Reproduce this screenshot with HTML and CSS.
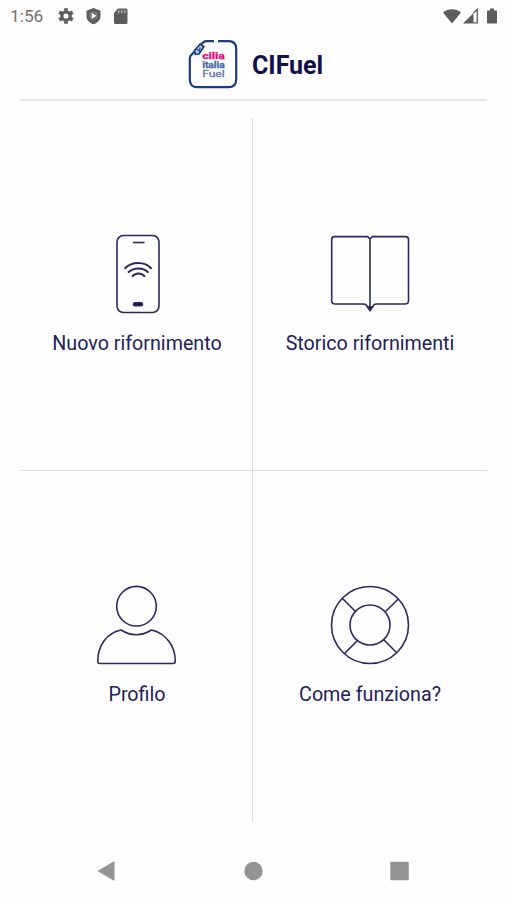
FILE: index.html
```
<!DOCTYPE html>
<html lang="it">
<head>
<meta charset="utf-8">
<title>CIFuel</title>
<link rel="stylesheet" href="styles.css">
</head>
<body>
<div class="status">
  <span class="clock">1:56</span>
  <svg class="status-left" width="74" height="20" viewBox="0 0 74 20">
    <g fill="none" stroke="#5d5d5d">
      <circle cx="9" cy="10" r="4.200" stroke-width="3.200"/>
      <path stroke-width="3.800" d="M9 2.200v2.600M9 15.200v2.600M2.300 6.100l2.200 1.300M13.500 12.600l2.200 1.300M2.300 13.900l2.200-1.300M13.500 7.400l2.200-1.300"/>
    </g>
    <path fill="#5d5d5d" d="M36.500 2l7 2.700v5.300c0 4-2.800 6.900-7 8.200-4.200-1.300-7-4.200-7-8.200V4.700z"/>
    <circle cx="36.500" cy="9.700" r="3.700" fill="none" stroke="#8a8a8a" stroke-width="1"/>
    <path fill="#fff" d="M34.700 6.700l5 3-5 3z"/>
    <path fill="#5d5d5d" d="M61 2.500h8q1.500 0 1.500 1.500v12.500q0 1.500-1.500 1.500H58.500q-1.500 0-1.500-1.500V7z"/>
    <path stroke="#b5b5b5" stroke-width="1.500" d="M61.700 4.300v3M64.700 4.300v3M67.700 4.300v3"/>
  </svg>
  <svg class="status-right" width="56" height="20" viewBox="0 0 56 20">
    <path fill="#5d5d5d" d="M1 6.500C6 2.300 14 2.300 19 6.500L10 17.500z"/>
    <path fill="#5d5d5d" d="M21 17.500L31.500 7v10.500z"/>
    <path fill="none" stroke="#5d5d5d" stroke-width="1.300" d="M31.500 7l3.800-3.800v13.600h-3.800"/>
    <path fill="#5d5d5d" d="M46 4.500h2v-2h4v2h2q1 0 1 1v11q0 1-1 1h-8q-1 0-1-1v-11q0-1 1-1z"/>
  </svg>
</div>
<header class="header">
  <svg class="logo" width="50" height="50" viewBox="0 0 50 50">
    <path fill="none" stroke="#183b82" stroke-width="2.200" d="M30 2.200h10.500q7.700 0 7.700 7.700v30.600q0 7.700-7.700 7.700H9.500q-7.700 0-7.700-7.700V19.500q0-2 1.500-3.600l3.500-3.500M13.500 5l1.800-1.600q1.300-1.200 3.200-1.200H26"/>
    <path fill="#b9cbe4" stroke="#183b82" stroke-width="1.700" d="M6.500 11.500l5.800-6.500 3.500 2.800-4.800 7.200-3.700.3z"/>
    <path fill="none" stroke="#183b82" stroke-width="1.200" d="M8 10l4.500 2.200M11 12.500l1.300-4"/>
    <g class="logo-text">
      <text x="14.200" y="19.500" textLength="22.500" lengthAdjust="spacingAndGlyphs" fill="#e4097c" stroke="#e4097c">cilia</text>
      <text x="14.200" y="28.800" textLength="22.500" lengthAdjust="spacingAndGlyphs" fill="#426aa5" stroke="#426aa5">italia</text>
      <text class="thin" x="14.200" y="38" textLength="22.500" lengthAdjust="spacingAndGlyphs" fill="#5f79ac" stroke="#5f79ac">Fuel</text>
    </g>
  </svg>
  <h1 class="title">CIFuel</h1>
</header>
<main class="menu">
  <section class="tile">
    <svg class="icon" viewBox="0 0 80 80">
      <rect x="20" y="1.500" width="42" height="77" rx="6.500"/>
      <path d="M36 8.500h11.500"/>
      <path stroke-width="2" d="M27.500 34.800c7.500-7.600 20.500-7.600 27 0M31 38.600c5.500-5.600 15.500-5.600 20.500 0M35 42.700c3.500-4.300 9.500-4.300 13 0"/>
      <rect class="solid" x="36.500" y="68.700" width="9" height="3" rx="1.500"/>
    </svg>
    <div class="label">Nuovo rifornimento</div>
  </section>
  <section class="tile">
    <svg class="icon" viewBox="0 0 80 80">
      <path d="M40 4.800L37.500 2.600H4.500Q1.700 2.600 1.700 5.400V66.700Q1.700 70 5 70H33.500Q36 70 37 72L40 75L43 72Q44 70 46.500 70H75Q78.500 70 78.500 66.700V5.400Q78.500 2.600 75.700 2.600H42.500z"/>
      <path d="M40 4.500v70"/>
      <path class="solid" d="M37.500 73h5L40 76.500z"/>
    </svg>
    <div class="label">Storico rifornimenti</div>
  </section>
  <section class="tile">
    <svg class="icon" viewBox="0 0 80 80">
      <circle cx="39.500" cy="21.200" r="19.800"/>
      <path d="M24 45Q39.200 54.500 54.500 45C68.500 48 78.300 61 78.300 76Q78.300 78.500 76 78.500H2.500Q0.800 78.500 0.800 76C0.800 61 9.500 48 24 45z"/>
    </svg>
    <div class="label">Profilo</div>
  </section>
  <section class="tile">
    <svg class="icon" viewBox="0 0 80 80">
      <circle cx="40" cy="40" r="38.500"/>
      <circle cx="40" cy="40" r="20"/>
      <path d="M12.500 13.500L25.500 26.500M68.300 14L55.500 26.500M14.500 68.500L27.500 55.500M66.500 67.500L53.500 54.500"/>
    </svg>
    <div class="label">Come funziona?</div>
  </section>
</main>
<nav class="nav">
  <svg class="nav-icons" width="312" height="24" viewBox="0 0 312 24" fill="#939393">
    <path d="M0.300 12L17.500 2v20z"/>
    <circle cx="156.500" cy="12" r="9.200"/>
    <rect x="293.300" y="2.800" width="18.500" height="18.500" rx="1"/>
  </svg>
</nav>
</body>
</html>
```
FILE: styles.css
```
* {
  box-sizing: border-box;
}

body {
  margin: 0;
  width: 506px;
  height: 900px;
  overflow: hidden;
  display: flex;
  flex-direction: column;
  background: #fefefe;
  color: #11104d;
  font-family: Roboto, sans-serif;
}

svg {
  display: block;
}

.status {
  height: 32px;
  padding: 0 8px 0 10px;
  display: flex;
  align-items: center;
}

.clock {
  width: 47px;
  font-size: 17.3px;
  color: #707070;
}

.status-right {
  margin-left: auto;
}

.status-left,
.status-right {
  margin-top: -1px;
}

.header {
  height: 69px;
  margin: 0 19px 0 20px;
  padding: 0 0 3px 168px;
  border-bottom: 2px solid #e6e6e6;
  display: flex;
  align-items: center;
  gap: 14px;
}

.logo-text {
  font: 700 9px Roboto, sans-serif;
  stroke-width: 0.3;
}

.thin {
  font-weight: 400;
}

.title {
  margin: 3px 0 0;
  font-size: 25px;
  line-height: 30px;
  font-weight: 700;
}

.menu {
  height: 704px;
  margin: 17px 19px 0 20px;
  display: grid;
  grid-template-columns: 233px 234px;
  grid-template-rows: 353px 351px;
}

.tile {
  display: flex;
  flex-direction: column;
  align-items: center;
  padding-top: 116px;
}

.tile:nth-child(odd) {
  padding-left: 2px;
  border-right: 1px solid #dedede;
}

.tile:nth-child(-n+2) {
  border-bottom: 1px solid #dedede;
}

.tile:nth-child(n+3) {
  padding-top: 114px;
}

.icon {
  width: 80px;
  height: 80px;
  flex: none;
  fill: none;
  stroke: #2b2961;
  stroke-width: 1.6;
}

.solid {
  fill: #17154f;
}

.label {
  margin-top: 17px;
  font-size: 19.7px;
  line-height: 26px;
  color: #22215a;
  white-space: nowrap;
}

.nav {
  flex: 1;
  padding: 37px 0 0 97px;
}
```
